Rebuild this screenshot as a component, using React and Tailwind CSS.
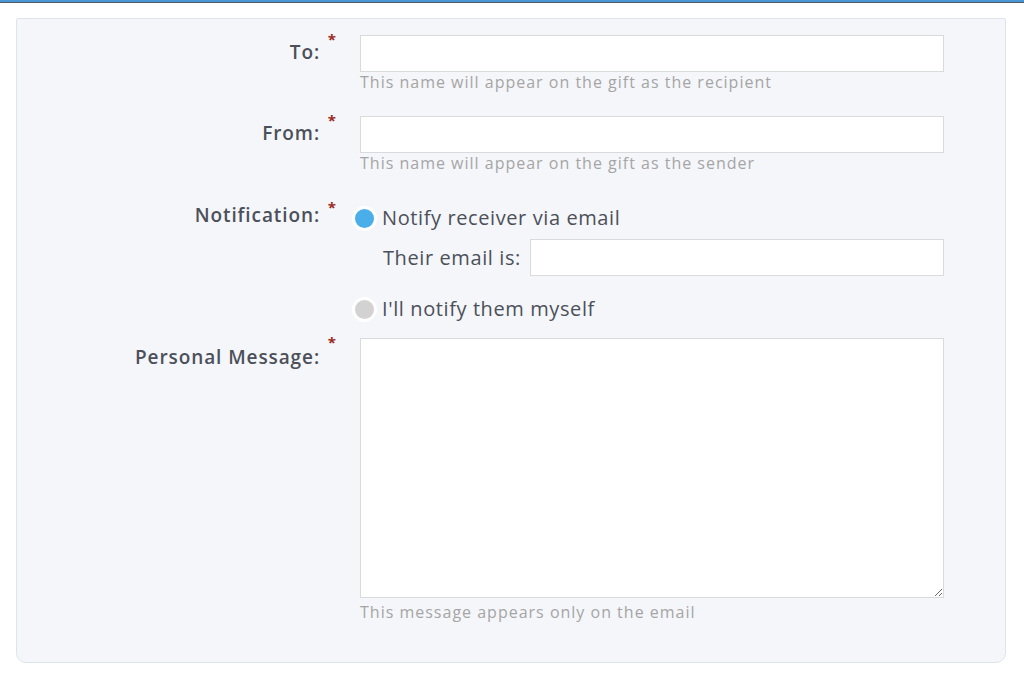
import React from 'react';

const font = { fontFamily: '"Open Sans", Lato, sans-serif' };

function Label({ children, offset = 'mt-[8px]' }) {
  return (
    <div className="w-[303px] shrink-0 flex justify-end relative">
      <span className={`text-[19px] font-semibold text-[#4b5059] leading-none tracking-[0.9px] ${offset}`}>{children}</span>
      <span className="absolute right-[-16px] top-[-3px] text-[#9b2a1a] text-[15px] font-bold leading-none">*</span>
    </div>
  );
}

function Radio({ checked, children }) {
  return (
    <label className="flex items-center gap-[5px] ml-[-8px]">
      <span
        className={`w-[25px] h-[25px] rounded-full border-[3px] border-white ${checked ? 'bg-[#4aaee8]' : 'bg-[#d1d2d1]'}`}
      />
      <span className="text-[20px] text-[#4b5059] tracking-[0.6px]">{children}</span>
    </label>
  );
}

function Hint({ children, className = '' }) {
  return <div className={`text-[16px] text-[#a5a5a5] tracking-[1px] leading-[20px] ${className}`}>{children}</div>;
}

export default function App() {
  return (
    <div className="min-h-[676px] bg-white" style={font}>
      <div className="h-[2px] bg-[#4a97d4]" />
      <div className="h-[1px] bg-[#4a5a6a]" />
      <div className="px-[16px] pt-[15px]">
        <div className="w-[990px] h-[645px] bg-[#f5f6fa] border border-[#dee3ec] rounded-b-[10px] rounded-t-[2px] pt-[16px]">
          <div className="flex gap-[40px]">
            <Label>To:</Label>
            <div className="w-[584px]">
              <input className="w-full h-[37px] block bg-white border border-[#d9dadb] outline-none" />
              <Hint>This name will appear on the gift as the recipient</Hint>
            </div>
          </div>
          <div className="flex gap-[40px] mt-[24px]">
            <Label>From:</Label>
            <div className="w-[584px]">
              <input className="w-full h-[37px] block bg-white border border-[#d9dadb] outline-none" />
              <Hint>This name will appear on the gift as the sender</Hint>
            </div>
          </div>
          <div className="flex gap-[40px] mt-[30px]">
            <Label offset="mt-[3px]">Notification:</Label>
            <div className="w-[584px]">
              <Radio checked>Notify receiver via email</Radio>
              <div className="flex items-center mt-[6px] pl-[23px]">
                <span className="text-[20px] text-[#4b5059] tracking-[0.6px] w-[147px]">Their email is:</span>
                <input className="flex-1 h-[37px] bg-white border border-[#d9dadb] outline-none" />
              </div>
              <div className="mt-[18px]">
                <Radio>I'll notify them myself</Radio>
              </div>
            </div>
          </div>
          <div className="flex gap-[40px] mt-[14px]">
            <Label offset="mt-[10px]">Personal Message:</Label>
            <div className="w-[584px]">
              <textarea className="w-full h-[260px] block bg-white border border-[#d9dadb] outline-none" />
              <Hint className="mt-[4px]">This message appears only on the email</Hint>
            </div>
          </div>
        </div>
      </div>
    </div>
  );
}
